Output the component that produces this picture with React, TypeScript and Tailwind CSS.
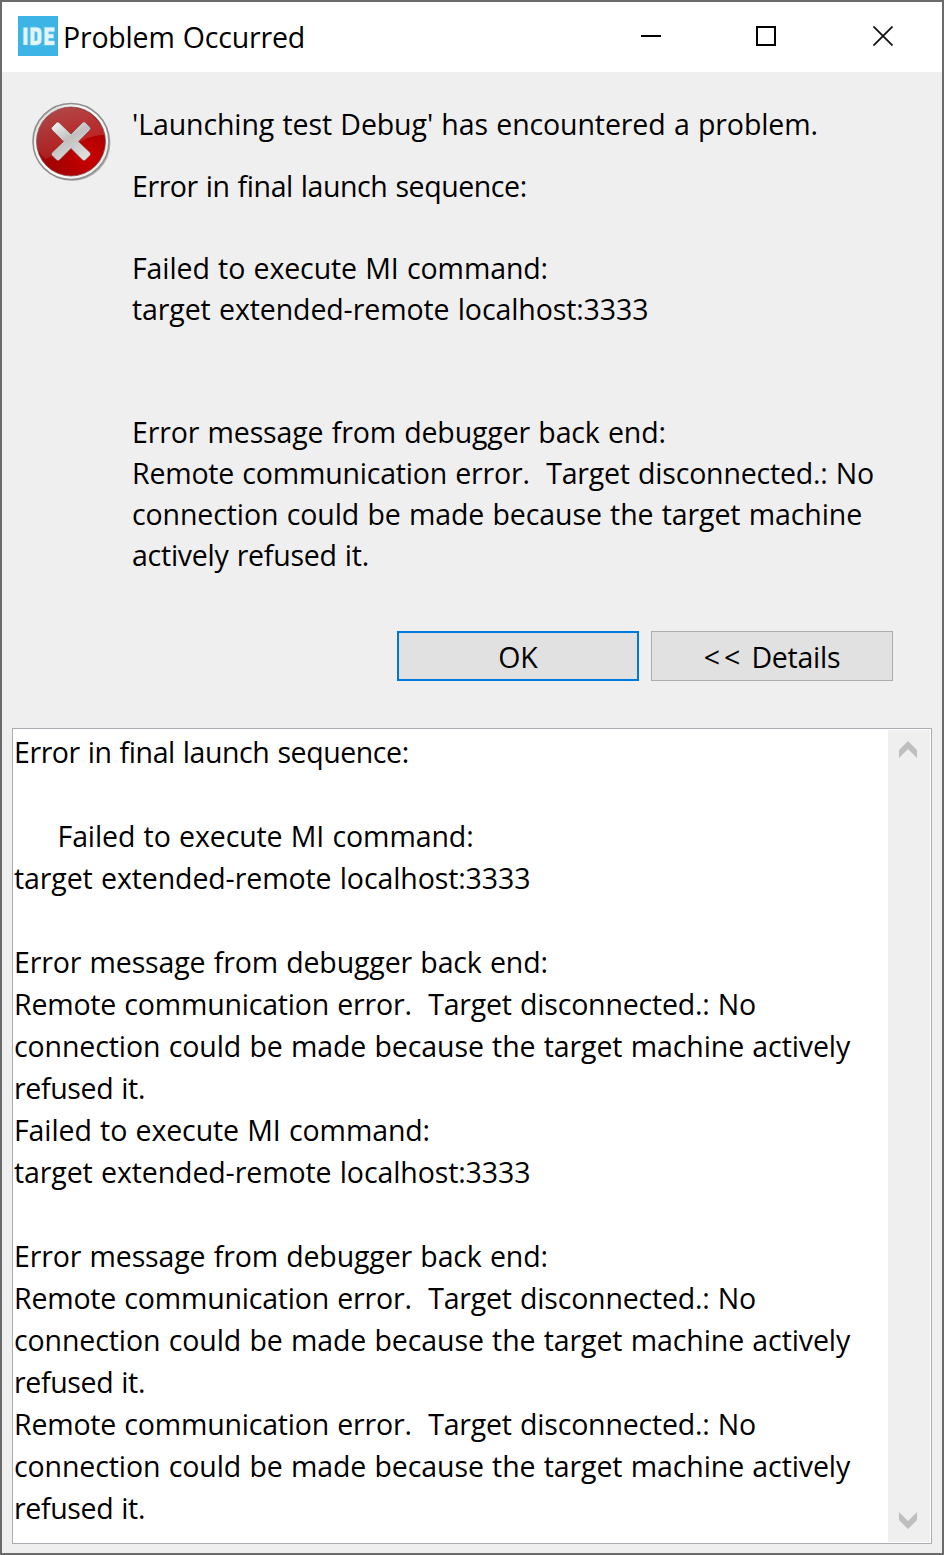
import React from "react";

const message = [
  "Error in final launch sequence:",
  "",
  "Failed to execute MI command:",
  "target extended-remote localhost:3333",
  "",
  "",
  "Error message from debugger back end:",
  "Remote communication error.  Target disconnected.: No",
  "connection could be made because the target machine",
  "actively refused it.",
];

const details = [
  "Error in final launch sequence:",
  "",
  "     Failed to execute MI command:",
  "target extended-remote localhost:3333",
  "",
  "Error message from debugger back end:",
  "Remote communication error.  Target disconnected.: No",
  "connection could be made because the target machine actively",
  "refused it.",
  "Failed to execute MI command:",
  "target extended-remote localhost:3333",
  "",
  "Error message from debugger back end:",
  "Remote communication error.  Target disconnected.: No",
  "connection could be made because the target machine actively",
  "refused it.",
  "Remote communication error.  Target disconnected.: No",
  "connection could be made because the target machine actively",
  "refused it.",
];

/* Letter spacing of each line, keyed by its text. */
const tracking: Record<string, string> = {
  "Error in final launch sequence:": "tracking-[-0.42px]",
  "     Failed to execute MI command:": "tracking-[-0.1px] pl-[2px]",
  "Error message from debugger back end:": "tracking-[-0.135px]",
  "Remote communication error.  Target disconnected.: No": "tracking-[-0.19px]",
  "actively refused it.": "tracking-[-0.25px]",
  "refused it.": "tracking-[-0.36px]",
};

function Line({ text, className }: { text: string; className: string }) {
  return <div className={`whitespace-pre ${className} ${tracking[text] ?? "tracking-[-0.1px]"}`}>{text}</div>;
}

function ErrorIcon() {
  return (
    <svg width="82" height="82" viewBox="0 0 82 82" className="block">
      <defs>
        <linearGradient id="ring" x1="0" y1="0" x2="1" y2="1">
          <stop offset="0" stopColor="#c8c8c8" />
          <stop offset="0.3" stopColor="#f4f4f4" />
          <stop offset="0.6" stopColor="#ffffff" />
          <stop offset="1" stopColor="#e0e0e0" />
        </linearGradient>
        <radialGradient id="red" cx="0.75" cy="0.72" r="0.8">
          <stop offset="0" stopColor="#cc0000" />
          <stop offset="0.45" stopColor="#ad0000" />
          <stop offset="1" stopColor="#960505" />
        </radialGradient>
        <linearGradient id="gloss" x1="0" y1="0" x2="0.3" y2="1">
          <stop offset="0" stopColor="#ffffff" stopOpacity="0.28" />
          <stop offset="1" stopColor="#ffffff" stopOpacity="0.1" />
        </linearGradient>
        <linearGradient id="cross" x1="0" y1="0" x2="0.6" y2="1">
          <stop offset="0" stopColor="#f8f8f8" />
          <stop offset="0.5" stopColor="#c0c0c0" />
          <stop offset="1" stopColor="#dddddd" />
        </linearGradient>
      </defs>
      <circle cx="40.500" cy="41" r="38" fill="#000000" opacity="0.22" />
      <circle cx="39" cy="39.500" r="38" fill="url(#ring)" stroke="#8f8f8f" strokeWidth="1.600" />
      <circle cx="39" cy="39.500" r="34.500" fill="url(#red)" stroke="#8a4a4a" strokeWidth="0.8" />
      <path d="M5 44A34 34 0 0 1 65 18C70 24 72 29 72.500 33C53 32 34 50 13 57Q7 52 5 44Z" fill="url(#gloss)" />
      <path
        d="M27 20.500L39 32L50.500 20.500Q52 19 53.500 20.500L58 25Q59.500 26.500 58 28L46.500 39.500L58 50.500Q59.500 52 58 53.500L53.500 58Q52 59.500 50.500 58L39 46.500L27.500 58Q26 59.500 24.500 58L20 53.500Q18.500 52 20 50.500L31.500 39.500L20 28Q18.500 26.500 20 25L24.500 20.500Q25.800 19.300 27 20.500Z"
        fill="url(#cross)"
        stroke="#8c2b2b"
        strokeWidth="0.6"
      />
    </svg>
  );
}

function IdeLetters() {
  return (
    <>
      <path d="M7.500 11.500V29" />
      <path d="M14.500 13.500V27H18Q21.500 27 21.500 23.500V17Q21.500 13.500 18 13.500Z" />
      <path d="M36.500 13.500H28.500V27H36.500M28.500 20.200H35.500" />
    </>
  );
}

export default function App() {
  return (
    <div className="h-[1555px] w-[944px] overflow-hidden bg-[#6b6b6b] p-[2px] font-['Open_Sans','Noto_Sans',sans-serif] text-[28.5px] text-black [word-spacing:1px]">
      <div className="flex h-[1551px] flex-col bg-[#efefef]">
        <header className="flex h-[70px] items-center bg-white pl-4">
          <svg width="40" height="40" viewBox="0 0 40 40" className="-mt-0.5 shrink-0">
            <rect width="40" height="40" fill="#3cb4e5" />
            <g fill="none" stroke="#8fd4f0" strokeWidth="5.500" opacity="0.6"><IdeLetters /></g>
            <g fill="none" stroke="#e2f4fc" strokeWidth="3.800"><IdeLetters /></g>
          </svg>
          <h1 className="ml-[5px] whitespace-pre leading-[40px] tracking-[-0.19px]">Problem Occurred</h1>
          <div className="ml-auto flex items-center pb-[2px] pr-[49px]">
            <svg width="20" height="20" viewBox="0 0 20 20"><path d="M0 10H20" stroke="#000" strokeWidth="2" /></svg>
            <svg width="20" height="20" viewBox="0 0 20 20" className="ml-[95px]"><path d="M1 1H19V19H1Z" fill="none" stroke="#000" strokeWidth="2" /></svg>
            <svg width="20" height="20" viewBox="0 0 20 20" className="ml-[97px]"><path d="M.5 .5L19.500 19.500M19.500 .5L.5 19.500" stroke="#111" strokeWidth="1.800" /></svg>
          </div>
        </header>

        <section className="flex h-[559px] pl-[30px] pt-[30px]">
          <ErrorIcon />
          <div className="ml-[18px] pt-[2px]">
            <Line text="'Launching test Debug' has encountered a problem." className="h-[62px] leading-[41px]" />
            {message.map((text, i) => (
              <Line key={i} text={text} className="h-[41px] leading-[41px]" />
            ))}
          </div>
        </section>

        <div className="flex justify-end gap-3 pr-[49px]">
          <button className="h-[50px] w-[242px] border-2 border-[#0078d7] bg-[#e1e1e1] pt-[2px]">OK</button>
          <button className="h-[50px] w-[242px] whitespace-pre border border-[#adadad] bg-[#e1e1e1] pt-[2px] tracking-[-0.25px]">
            <span className="tracking-[4px]">{"<<"}</span>
            {" Details"}
          </button>
        </div>

        <section className="mx-[10px] mt-[47px] flex h-[816px] border border-[#abadb3] bg-white">
          <div className="flex-1 pl-[1px] pt-[2px]">
            {details.map((text, i) => (
              <Line key={i} text={text} className="h-[42px] leading-[42px]" />
            ))}
          </div>
          <div className="my-[1px] mr-[1px] flex w-[42px] flex-col items-start justify-between bg-[#efefef] pb-[13px] pl-[11px] pt-[11px]">
            <svg width="18" height="17" viewBox="0 0 18 17"><path d="M0 9L9 0L18 9V17L9 8L0 17Z" fill="#bfbfbf" /></svg>
            <svg width="18" height="17" viewBox="0 0 18 17"><path d="M0 0L9 9L18 0V8L9 17L0 8Z" fill="#bfbfbf" /></svg>
          </div>
        </section>
      </div>
    </div>
  );
}
